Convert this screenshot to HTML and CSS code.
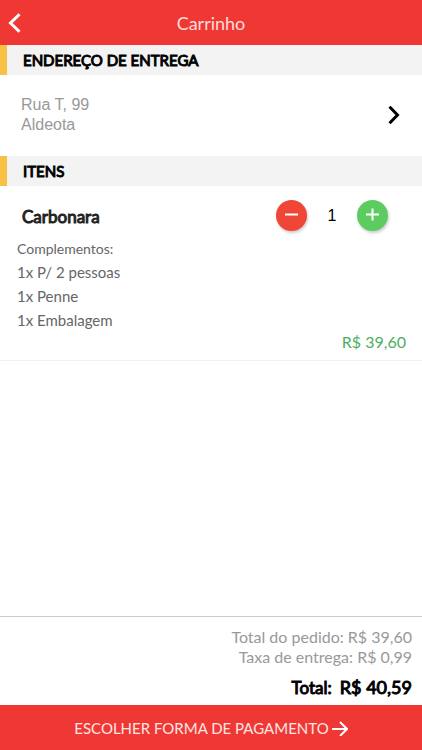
FILE: index.html
```html
<!DOCTYPE html>
<html lang="pt-BR">
<head>
<meta charset="utf-8">
<meta name="viewport" content="width=device-width, initial-scale=1">
<title>Carrinho</title>
<link rel="stylesheet" href="styles.css">
</head>
<body>
<header class="topbar">
  <button class="back" type="button" aria-label="Voltar">
    <svg width="14" height="20" viewBox="0 0 14 20" fill="none" stroke="currentColor" stroke-width="3"><path d="M11.500 1.200 2.500 10l9 8.800"/></svg>
  </button>
  <h1 class="title">Carrinho</h1>
</header>
<main class="content">
  <section>
    <h2 class="section-title">ENDEREÇO DE ENTREGA</h2>
    <a class="address" href="#endereco">
      <span>Rua T, 99<br>Aldeota</span>
      <svg width="12" height="20" viewBox="0 0 12 20" fill="none" stroke="#000" stroke-width="3"><path d="M1.500 1.700 9.500 10l-8 8.300"/></svg>
    </a>
  </section>
  <section>
    <h2 class="section-title">ITENS</h2>
    <article class="item">
      <div class="item-head">
        <h3 class="item-name">Carbonara</h3>
        <div class="stepper">
          <button class="round minus" type="button" aria-label="Diminuir">
            <svg width="15" height="15" viewBox="0 0 15 15" stroke="#fff" stroke-width="2"><path d="M1 6.500h13"/></svg>
          </button>
          <output class="quantity">1</output>
          <button class="round plus" type="button" aria-label="Aumentar">
            <svg width="15" height="15" viewBox="0 0 15 15" stroke="#fff" stroke-width="2"><path d="M1 6.500h13M7.500 .5v12"/></svg>
          </button>
        </div>
      </div>
      <p class="extras-title">Complementos:</p>
      <ul class="extras">
        <li>1x P/ 2 pessoas</li>
        <li>1x Penne</li>
        <li>1x Embalagem</li>
      </ul>
      <p class="item-price">R$ 39,60</p>
    </article>
  </section>
</main>
<footer class="summary">
  <div class="totals">
    <p class="subtotal">Total do pedido: R$ 39,60</p>
    <p class="subtotal">Taxa de entrega: R$ 0,99</p>
    <p class="total"><span class="total-label">Total:</span><span>R$ 40,59</span></p>
  </div>
  <button class="checkout" type="button">
    <span>ESCOLHER FORMA DE PAGAMENTO</span>
    <svg width="16" height="16" viewBox="0 0 16 16" fill="none" stroke="currentColor" stroke-width="2"><path d="M0 9h14M8 2l7 7-7 7"/></svg>
  </button>
</footer>
</body>
</html>
```
FILE: styles.css
```css
* {
  box-sizing: border-box;
}

body {
  margin: 0;
  min-height: 100vh;
  display: flex;
  flex-direction: column;
  background: #fff;
  color: #000;
  font-family: Lato, "Liberation Sans", sans-serif;
  font-size: 16px;
}

h1, h2, h3, p, ul {
  margin: 0;
  padding: 0;
  font-weight: 400;
}

button {
  border: 0;
  padding: 0;
  font: inherit;
  cursor: pointer;
}

svg {
  display: block;
}

.topbar {
  display: grid;
  grid-template-columns: 40px 1fr 40px;
  align-items: center;
  height: 45px;
  background: #ef3834;
  color: #fff;
}

.back {
  height: 45px;
  padding-left: 8px;
  background: none;
  color: #fff;
}

.title {
  color: #ffdcda;
  font-size: 18px;
  line-height: 24px;
  text-align: center;
}

.content {
  flex: 1;
}

.section-title {
  padding: 0 16px;
  border-left: 7px solid #f8c044;
  background: #f3f3f3;
  font-size: 15px;
  line-height: 30px;
  -webkit-text-stroke: 1px currentColor;
}

.address {
  display: flex;
  align-items: center;
  justify-content: space-between;
  min-height: 81px;
  padding: 0 22px 2px 21px;
  color: #999;
  font-family: "Liberation Sans", sans-serif;
  line-height: 20px;
  text-decoration: none;
}

.item {
  padding: 7px 16px 8px 17px;
  border-bottom: 1px solid #f0f0f0;
  color: #666;
}

.item-head {
  display: flex;
  align-items: center;
  justify-content: space-between;
  height: 45px;
  padding: 0 18px 0 5px;
}

.item-name {
  padding-top: 2px;
  color: #222;
  font-size: 17px;
  -webkit-text-stroke: 1px currentColor;
}

.stepper {
  display: flex;
  align-items: center;
}

.round {
  display: grid;
  place-items: center;
  width: 31px;
  height: 31px;
  border-radius: 50%;
  box-shadow: 1px 2px 3px rgba(0, 0, 0, 0.2);
}

.minus {
  background: #ef4638;
}

.plus {
  background: #5dcc60;
}

.quantity {
  width: 50px;
  color: #000;
  font-family: "Liberation Sans", sans-serif;
  text-align: center;
}

.extras-title {
  font-size: 14px;
  line-height: 22px;
}

.extras {
  font-size: 15px;
  line-height: 24px;
  list-style: none;
}

.item-price {
  color: #4cae62;
  line-height: 20px;
  text-align: right;
}

.totals {
  padding: 10px 10px 5px;
  border-top: 1px solid #ccc;
  text-align: right;
}

.subtotal {
  color: #999;
  line-height: 20px;
}

.total {
  display: flex;
  align-items: baseline;
  justify-content: flex-end;
  gap: 8px;
  padding-top: 8px;
  font-size: 18px;
  line-height: 24px;
  -webkit-text-stroke: 1px currentColor;
}

.total-label {
  font-size: 17px;
}

.checkout {
  display: flex;
  align-items: center;
  justify-content: center;
  gap: 3px;
  width: 100%;
  height: 45px;
  background: #ef3834;
  color: #ffe6e5;
  font-size: 15px;
}

.checkout svg {
  color: #fff;
}
```
